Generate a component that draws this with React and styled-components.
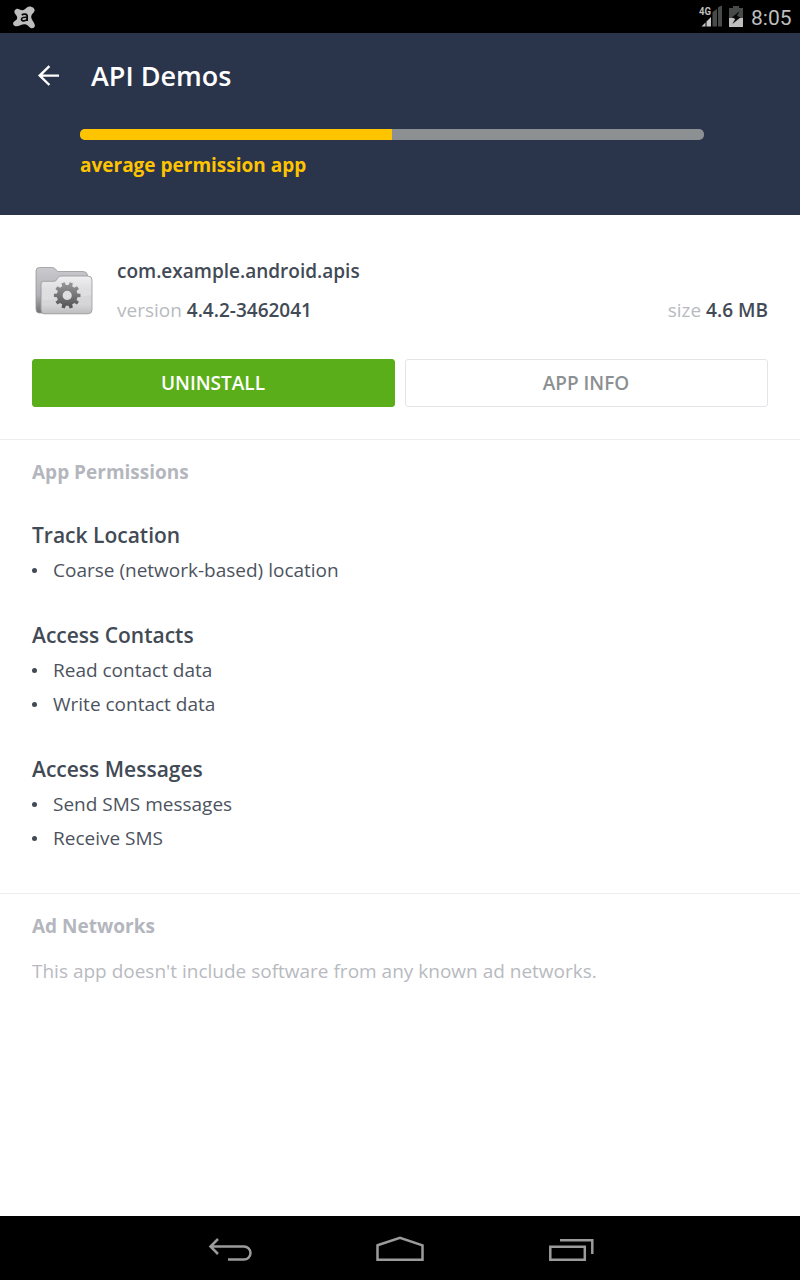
import React from "react";
import styled, { createGlobalStyle } from "styled-components";

const GlobalStyle = createGlobalStyle`
  *, *::before, *::after { box-sizing: border-box; }
  body { margin: 0; background: #fff; }
  h1, h2, h3, p, ul { margin: 0; padding: 0; }
`;

const Screen = styled.div`
  display: flex;
  flex-direction: column;
  width: 800px;
  height: 1280px;
  overflow: hidden;
  background: #fff;
  color: #424a55;
  font-family: "Open Sans", "Noto Sans", sans-serif;
  font-size: 19px;
`;

const StatusBar = styled.div`
  display: flex;
  align-items: center;
  height: 33px;
  flex: none;
  padding: 0 9px 0 12px;
  background: #000;
`;

const StatusIcons = styled.div`
  display: flex;
  align-items: center;
  margin-left: auto;
`;

const BatterySlot = styled.div`
  margin: 0 1px 0 6px;
`;

const Clock = styled.span`
  width: 40px;
  margin-left: 7px;
  padding-top: 3px;
  font-family: Roboto, sans-serif;
  font-size: 21px;
  line-height: 30px;
  color: #bebebe;
  white-space: nowrap;
`;

const Header = styled.header`
  flex: none;
  height: 182px;
  padding-top: 16px;
  background: #2a344b;
`;

const TitleBar = styled.div`
  display: flex;
  align-items: center;
  gap: 31px;
  height: 54px;
  padding-left: 37px;
`;

const Title = styled.h1`
  font-size: 27px;
  font-weight: 600;
  line-height: 54px;
  color: #fff;
`;

const Rating = styled.div`
  padding: 26px 96px 0 80px;
`;

const Track = styled.div`
  height: 11px;
  border-radius: 5px;
  overflow: hidden;
  background: #8c9092;
`;

const TrackFill = styled.div`
  width: 50%;
  height: 100%;
  background: #ffc400;
`;

const RatingLabel = styled.p`
  margin-top: 12px;
  font-weight: 700;
  line-height: 26px;
  color: #ffc400;
`;

const Summary = styled.section`
  flex: none;
  height: 225px;
  padding: 44px 32px 0;
  border-bottom: 1px solid #ededef;
`;

const AppRow = styled.div`
  display: flex;
  gap: 21px;
  height: 64px;
`;

const AppText = styled.div`
  flex: 1;
`;

const PackageName = styled.h2`
  font-size: inherit;
  font-weight: 600;
  line-height: 24px;
`;

const Facts = styled.div`
  display: flex;
  justify-content: space-between;
  margin-top: 15px;
  line-height: 24px;
`;

const Fact = styled.span`
  color: #b8bac0;
  white-space: pre;
`;

const FactValue = styled.span`
  font-weight: 600;
  color: #424a55;
`;

const Actions = styled.div`
  display: grid;
  grid-template-columns: 1fr 1fr;
  gap: 10px;
  margin-top: 36px;
`;

const ActionButton = styled.button`
  height: 48px;
  padding: 0 1px 1px 0;
  border: 1px solid ${(p) => (p.$primary ? "#5aae19" : "#e3e4e8")};
  border-radius: 3px;
  background: ${(p) => (p.$primary ? "#5aae19" : "#fff")};
  color: ${(p) => (p.$primary ? "#fff" : "#8c9092")};
  font-family: inherit;
  font-size: 19px;
  font-weight: 600;
`;

const Section = styled.section`
  flex: none;
  height: ${(p) => p.$height}px;
  padding: 19px 32px 0;
  border-bottom: ${(p) => (p.$divided ? "1px solid #ededef" : "none")};
`;

const SectionTitle = styled.h2`
  font-size: inherit;
  font-weight: 700;
  line-height: 26px;
  color: #b4b6bd;
`;

const Group = styled.div`
  margin-top: ${(p) => (p.$first ? 34 : 32)}px;
`;

const GroupTitle = styled.h3`
  font-size: 21px;
  font-weight: 600;
  line-height: 32px;
`;

const PermissionList = styled.ul`
  list-style: none;
  margin-top: 2px;
`;

const Permission = styled.li`
  display: flex;
  align-items: center;
  height: 34px;
  line-height: 34px;
  gap: 16px;
  color: #4c535e;

  &::before {
    content: "";
    width: 5px;
    height: 5px;
    border-radius: 50%;
    background: #424a55;
  }
`;

const Note = styled.p`
  margin-top: 19px;
  line-height: 26px;
  color: #b8bac0;
`;

const NavBar = styled.nav`
  display: flex;
  justify-content: center;
  align-items: center;
  gap: 122px;
  flex: none;
  height: 64px;
  margin-top: auto;
  padding: 3px 0 0 3px;
  background: #000;
`;

const Icon = styled.svg`
  display: block;
  flex: none;
`;

const AntivirusIcon = () => (
  <Icon width="24" height="26" viewBox="0 0 24 26">
    <path
      d="M4 5.2C6 4 8 6.3 10.5 6.2C13.5 6 14.5 2.4 17.5 2.4C20.5 2.4 23 4.6 22.6 6.8C22 9.3 19.4 9.8 19.2 12.5C19 15.8 22.9 18.8 22.9 21.6C22.8 24 20.4 25 18.6 23.9C16.7 22.8 15.6 20.4 13 20.2C9.5 20 7.3 22.3 4.5 22.3C2 22.3.5 20.4 1.3 18.5C2.1 16.7 5 16.6 5.2 14C5.4 11.3 3.2 10.7 2.5 8.4C2.1 7 2.8 5.8 4 5.2Z"
      fill="#bebebe"
    />
    <path d="M9.8 11.2C11.3 9.6 15.2 9.7 15.2 12.2V17M15.1 13.3C12.2 13.1 9.5 13.3 9.5 15.2C9.5 17.7 14.1 17.5 15.1 14.8" fill="none" stroke="#090909" strokeWidth="1.7" />
  </Icon>
);

const SignalLabel = styled.text`
  font-family: Roboto, sans-serif;
  font-size: 11.5px;
  font-weight: 700;
  fill: #bebebe;
`;

const SignalIcon = () => (
  <Icon width="24" height="26" viewBox="0 0 24 26">
    <path d="M19 3.2L23 1.5V22.5H19ZM13.5 8L18 5V22.5H13.5Z" fill="#484a49" />
    <path d="M2.5 22.5L6.5 18.5V22.5ZM7.5 17.5L12 13V22.5H7.5Z" fill="#c7c7c7" />
    <SignalLabel x="0" y="11.4" textLength="12" lengthAdjust="spacingAndGlyphs">4G</SignalLabel>
  </Icon>
);

const BatteryIcon = () => (
  <Icon width="14" height="22" viewBox="0 0 14 22">
    <path d="M4 0H10V2H14V12H0V2H4Z" fill="#484a49" />
    <path d="M0 12H14V21H0Z" fill="#bebebe" />
    <path d="M10.8 5L3 11.3L6.2 13L3.4 18L11.4 11.5L8 9.8Z" fill="#080808" />
  </Icon>
);

const BackArrow = () => (
  <Icon width="23" height="24" viewBox="0 0 23 24">
    <path d="M12.4 2.2L2.7 11.6L12.4 21M2.7 11.6H22" fill="none" stroke="#fff" strokeWidth="2.4" />
  </Icon>
);

const gearOutline = (cx, cy, teeth, outer, inner) => {
  const step = (Math.PI * 2) / teeth;
  const points = [];
  for (let i = 0; i < teeth; i += 1) {
    [[-0.29, inner], [-0.2, outer], [0.2, outer], [0.29, inner]].forEach(([offset, r]) => {
      const a = (i + offset) * step;
      points.push(`${(cx + r * Math.cos(a)).toFixed(2)} ${(cy + r * Math.sin(a)).toFixed(2)}`);
    });
  }
  return `M${points.join("L")}Z`;
};

const FolderIcon = () => (
  <Icon width="64" height="64" viewBox="0 0 64 64">
    <defs>
      <linearGradient id="back" x1="0" y1="0" x2="0" y2="1">
        <stop offset="0" stopColor="#c9c9ce" />
        <stop offset=".6" stopColor="#b2b2b7" />
        <stop offset="1" stopColor="#707074" />
      </linearGradient>
      <linearGradient id="front" x1="0" y1="0" x2="0" y2="1">
        <stop offset="0" stopColor="#ececee" />
        <stop offset=".35" stopColor="#d7d7da" />
        <stop offset=".75" stopColor="#d6d6d8" />
        <stop offset="1" stopColor="#bdbdbf" />
      </linearGradient>
      <linearGradient id="gear" x1="0" y1="0" x2="0" y2="1">
        <stop offset="0" stopColor="#98989a" />
        <stop offset="1" stopColor="#515153" />
      </linearGradient>
    </defs>
    <path d="M4 12Q4 8.5 7.5 8.5H20Q22 8.5 23.5 10L25.5 12.5H51Q55 12.5 55.5 16V54H7Q4 54 4 50Z" fill="url(#back)" stroke="#98989c" strokeWidth=".8" />
    <path d="M9 25Q9 22.3 11.5 22.3H22Q24 22.3 25 20L26 18.5Q27 17 29 17H56Q60 17 60 21V51Q60 54.8 56 54.8H12Q9 54.8 9 51Z" fill="url(#front)" stroke="#98989c" strokeWidth=".8" />
    <path d="M10 41Q36 40 59.3 36V22Q59 18 55.5 18H30Q27.5 18 26.5 20.5Q25 23.3 22.5 23.3H12Q10 23.3 10 26Z" fill="#fff" opacity=".2" />
    <path
      fill="url(#gear)"
      fillRule="evenodd"
      d={`${gearOutline(35.2, 36.4, 10, 13.4, 10.4)}M35.2 31.8A4.6 4.6 0 1 0 35.2 41A4.6 4.6 0 1 0 35.2 31.8Z`}
    />
  </Icon>
);

const NavBack = () => (
  <Icon width="46" height="30" viewBox="0 0 46 30">
    <path d="M11 4L3.5 11.5L11 19M3.5 11.5H37A6.5 6.5 0 0 1 37 24.5H21" fill="none" stroke="#9b9b9b" strokeWidth="2.5" />
  </Icon>
);

const NavHome = () => (
  <Icon width="50" height="30" viewBox="0 0 50 30">
    <path d="M2.5 10.3L25 2.8L47.5 10.3V24.7H2.5Z" fill="none" stroke="#9b9b9b" strokeWidth="2.5" />
  </Icon>
);

const NavRecents = () => (
  <Icon width="50" height="30" viewBox="0 0 50 30">
    <path d="M3.3 11.7H37.8V24.7H3.3ZM13 5.2H45.3V19" fill="none" stroke="#9b9b9b" strokeWidth="2.5" />
  </Icon>
);

const groups = [
  { title: "Track Location", items: ["Coarse (network-based) location"] },
  { title: "Access Contacts", items: ["Read contact data", "Write contact data"] },
  { title: "Access Messages", items: ["Send SMS messages", "Receive SMS"] },
];

export default function App() {
  return (
    <Screen>
      <GlobalStyle />
      <StatusBar>
        <AntivirusIcon />
        <StatusIcons>
          <SignalIcon />
          <BatterySlot><BatteryIcon /></BatterySlot>
          <Clock>8:05</Clock>
        </StatusIcons>
      </StatusBar>
      <Header>
        <TitleBar>
          <BackArrow />
          <Title>API Demos</Title>
        </TitleBar>
        <Rating>
          <Track><TrackFill /></Track>
          <RatingLabel>average permission app</RatingLabel>
        </Rating>
      </Header>
      <Summary>
        <AppRow>
          <FolderIcon />
          <AppText>
            <PackageName>com.example.android.apis</PackageName>
            <Facts>
              <Fact>version <FactValue>4.4.2-3462041</FactValue></Fact>
              <Fact>size <FactValue>4.6 MB</FactValue></Fact>
            </Facts>
          </AppText>
        </AppRow>
        <Actions>
          <ActionButton $primary>UNINSTALL</ActionButton>
          <ActionButton>APP INFO</ActionButton>
        </Actions>
      </Summary>
      <Section $height={454} $divided>
        <SectionTitle>App Permissions</SectionTitle>
        {groups.map((group, i) => (
          <Group key={group.title} $first={i === 0}>
            <GroupTitle>{group.title}</GroupTitle>
            <PermissionList>
              {group.items.map((item) => <Permission key={item}>{item}</Permission>)}
            </PermissionList>
          </Group>
        ))}
      </Section>
      <Section $height={120}>
        <SectionTitle>Ad Networks</SectionTitle>
        <Note>This app doesn't include software from any known ad networks.</Note>
      </Section>
      <NavBar>
        <NavBack />
        <NavHome />
        <NavRecents />
      </NavBar>
    </Screen>
  );
}
